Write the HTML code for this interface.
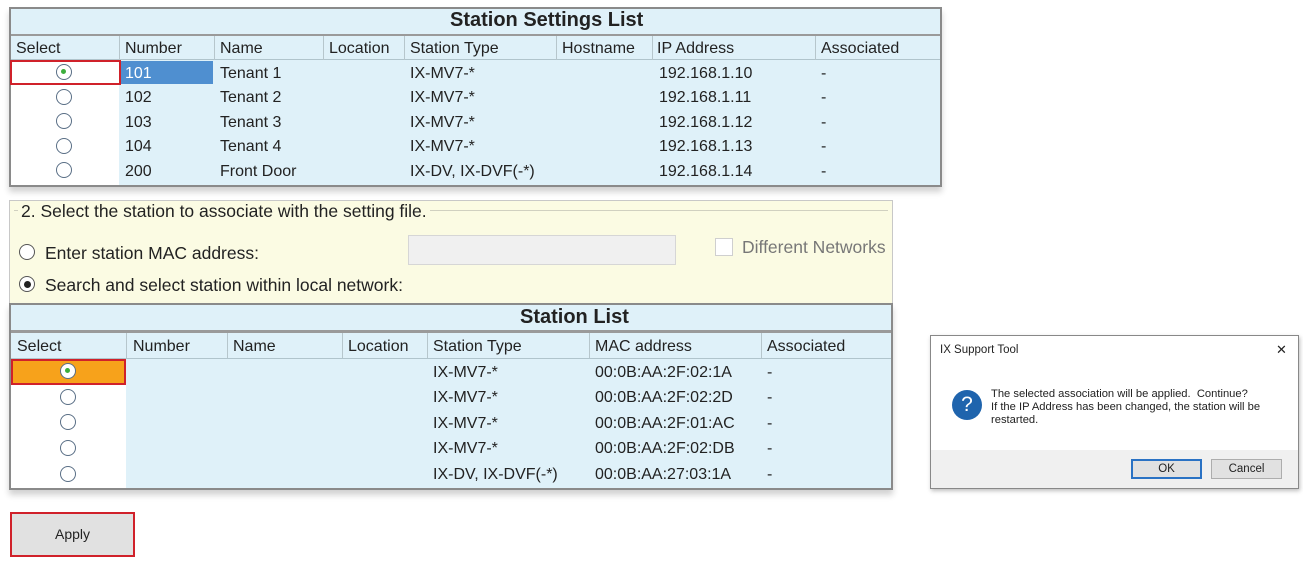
<!DOCTYPE html>
<html><head><meta charset="utf-8"><style>
*{margin:0;padding:0;box-sizing:border-box}
body{width:1303px;height:565px;background:#fff;position:relative;overflow:hidden;font-family:"Liberation Sans",Arial,sans-serif;color:#222}
.a{position:absolute;white-space:nowrap}
.t{font-size:16px;line-height:16px}
.m{font-size:17.5px;line-height:18px}
.b{position:absolute}
.r{position:absolute;width:16px;height:16px;border:1.5px solid #5a6f86;border-radius:50%;background:#fff}
.r.on::after{content:"";position:absolute;left:4px;top:4px;width:5px;height:5px;border-radius:50%;background:#3cae3c}
</style></head><body>

<!-- Top table -->
<div class="b" style="left:9px;top:7px;width:933px;height:180px;border:2px solid #8a8a8a;background:#dff1f9;box-shadow:0 5px 6px rgba(0,0,0,0.18)"></div>
<div class="a" style="left:450px;top:9px;font-weight:bold;font-size:20px">Station Settings List</div>
<div class="b" style="left:11px;top:34px;width:929px;height:2px;background:#9a9a9a"></div>
<div class="b" style="left:11px;top:59px;width:929px;height:1px;background:#b0c4cc"></div>
<div class="b" style="left:11px;top:61px;width:108px;height:124px;background:#fff"></div>
<div class="b" style="left:121px;top:61px;width:92px;height:23px;background:#4f8fd0"></div>
<div class="b" style="left:10px;top:60px;width:111px;height:25px;border:2px solid #d0212a"></div>
<div class="b" style="left:119px;top:36px;width:1px;height:24px;background:#b6c6cc"></div>
<div class="b" style="left:214px;top:36px;width:1px;height:24px;background:#b6c6cc"></div>
<div class="b" style="left:323px;top:36px;width:1px;height:24px;background:#b6c6cc"></div>
<div class="b" style="left:404px;top:36px;width:1px;height:24px;background:#b6c6cc"></div>
<div class="b" style="left:556px;top:36px;width:1px;height:24px;background:#b6c6cc"></div>
<div class="b" style="left:652px;top:36px;width:1px;height:24px;background:#b6c6cc"></div>
<div class="b" style="left:815px;top:36px;width:1px;height:24px;background:#b6c6cc"></div>
<div class="a t" style="left:16px;top:41px">Select</div>
<div class="a t" style="left:125px;top:41px">Number</div>
<div class="a t" style="left:220px;top:41px">Name</div>
<div class="a t" style="left:329px;top:41px">Location</div>
<div class="a t" style="left:410px;top:41px">Station Type</div>
<div class="a t" style="left:562px;top:41px">Hostname</div>
<div class="a t" style="left:657px;top:41px">IP Address</div>
<div class="a t" style="left:821px;top:41px">Associated</div>

<div class="r on" style="left:56px;top:64px"></div>
<div class="r" style="left:56px;top:89px"></div>
<div class="r" style="left:56px;top:113px"></div>
<div class="r" style="left:56px;top:138px"></div>
<div class="r" style="left:56px;top:162px"></div>

<div class="a t" style="left:125px;top:66px;color:#fff">101</div>
<div class="a t" style="left:125px;top:90px">102</div>
<div class="a t" style="left:125px;top:115px">103</div>
<div class="a t" style="left:125px;top:139px">104</div>
<div class="a t" style="left:125px;top:164px">200</div>
<div class="a t" style="left:220px;top:66px">Tenant 1</div>
<div class="a t" style="left:220px;top:90px">Tenant 2</div>
<div class="a t" style="left:220px;top:115px">Tenant 3</div>
<div class="a t" style="left:220px;top:139px">Tenant 4</div>
<div class="a t" style="left:220px;top:164px">Front Door</div>
<div class="a t" style="left:410px;top:66px">IX-MV7-*</div>
<div class="a t" style="left:410px;top:90px">IX-MV7-*</div>
<div class="a t" style="left:410px;top:115px">IX-MV7-*</div>
<div class="a t" style="left:410px;top:139px">IX-MV7-*</div>
<div class="a t" style="left:410px;top:164px">IX-DV, IX-DVF(-*)</div>
<div class="a t" style="left:659px;top:66px">192.168.1.10</div>
<div class="a t" style="left:659px;top:90px">192.168.1.11</div>
<div class="a t" style="left:659px;top:115px">192.168.1.12</div>
<div class="a t" style="left:659px;top:139px">192.168.1.13</div>
<div class="a t" style="left:659px;top:164px">192.168.1.14</div>
<div class="a t" style="left:821px;top:66px">-</div>
<div class="a t" style="left:821px;top:90px">-</div>
<div class="a t" style="left:821px;top:115px">-</div>
<div class="a t" style="left:821px;top:139px">-</div>
<div class="a t" style="left:821px;top:164px">-</div>

<!-- Middle yellow section -->
<div class="b" style="left:9px;top:200px;width:884px;height:104px;background:#fbfbe3;border:1px solid #c8c8c8"></div>
<div class="b" style="left:14px;top:210px;width:874px;height:1px;background:#d0d0c0"></div>
<div class="a m" style="left:18px;top:202px;background:#fbfbe3;padding:0 3px">2. Select the station to associate with the setting file.</div>
<div class="r" style="left:19px;top:244px;border-color:#555"></div>
<div class="a m" style="left:45px;top:244px">Enter station MAC address:</div>
<div class="r" style="left:19px;top:276px;border-color:#555"></div>
<div class="b" style="left:24px;top:281px;width:7px;height:7px;border-radius:50%;background:#222"></div>
<div class="a m" style="left:45px;top:276px">Search and select station within local network:</div>
<div class="b" style="left:408px;top:235px;width:268px;height:30px;background:#f0f0f0;border:1px solid #d6d6d6"></div>
<div class="b" style="left:715px;top:238px;width:18px;height:18px;background:#fff;border:1px solid #cfcfcf"></div>
<div class="a m" style="left:742px;top:238px;color:#777">Different Networks</div>

<!-- Station List -->
<div class="b" style="left:9px;top:303px;width:884px;height:187px;border:2px solid #8a8a8a;background:#dff1f9;box-shadow:0 5px 6px rgba(0,0,0,0.18)"></div>
<div class="a" style="left:520px;top:306px;font-weight:bold;font-size:20px">Station List</div>
<div class="b" style="left:11px;top:330px;width:880px;height:3px;background:#9a9a9a"></div>
<div class="b" style="left:11px;top:358px;width:880px;height:1px;background:#b0c4cc"></div>
<div class="b" style="left:11px;top:359px;width:115px;height:129px;background:#fff"></div>
<div class="b" style="left:11px;top:359px;width:115px;height:26px;background:#f7a21b;border:2px solid #d0212a"></div>
<div class="b" style="left:126px;top:333px;width:1px;height:25px;background:#b6c6cc"></div>
<div class="b" style="left:227px;top:333px;width:1px;height:25px;background:#b6c6cc"></div>
<div class="b" style="left:342px;top:333px;width:1px;height:25px;background:#b6c6cc"></div>
<div class="b" style="left:427px;top:333px;width:1px;height:25px;background:#b6c6cc"></div>
<div class="b" style="left:589px;top:333px;width:1px;height:25px;background:#b6c6cc"></div>
<div class="b" style="left:761px;top:333px;width:1px;height:25px;background:#b6c6cc"></div>
<div class="a t" style="left:17px;top:339px">Select</div>
<div class="a t" style="left:133px;top:339px">Number</div>
<div class="a t" style="left:233px;top:339px">Name</div>
<div class="a t" style="left:348px;top:339px">Location</div>
<div class="a t" style="left:433px;top:339px">Station Type</div>
<div class="a t" style="left:595px;top:339px">MAC address</div>
<div class="a t" style="left:767px;top:339px">Associated</div>

<div class="r on" style="left:60px;top:363px"></div>
<div class="r" style="left:60px;top:389px"></div>
<div class="r" style="left:60px;top:414px"></div>
<div class="r" style="left:60px;top:440px"></div>
<div class="r" style="left:60px;top:466px"></div>

<div class="a t" style="left:433px;top:365px">IX-MV7-*</div>
<div class="a t" style="left:433px;top:390px">IX-MV7-*</div>
<div class="a t" style="left:433px;top:416px">IX-MV7-*</div>
<div class="a t" style="left:433px;top:441px">IX-MV7-*</div>
<div class="a t" style="left:433px;top:467px">IX-DV, IX-DVF(-*)</div>
<div class="a t" style="left:595px;top:365px">00:0B:AA:2F:02:1A</div>
<div class="a t" style="left:595px;top:390px">00:0B:AA:2F:02:2D</div>
<div class="a t" style="left:595px;top:416px">00:0B:AA:2F:01:AC</div>
<div class="a t" style="left:595px;top:441px">00:0B:AA:2F:02:DB</div>
<div class="a t" style="left:595px;top:467px">00:0B:AA:27:03:1A</div>
<div class="a t" style="left:767px;top:365px">-</div>
<div class="a t" style="left:767px;top:390px">-</div>
<div class="a t" style="left:767px;top:416px">-</div>
<div class="a t" style="left:767px;top:441px">-</div>
<div class="a t" style="left:767px;top:467px">-</div>

<!-- Apply -->
<div class="b" style="left:10px;top:512px;width:125px;height:45px;background:#e1e1e1;border:2px solid #d0212a"></div>
<div class="a" style="left:10px;top:526px;width:125px;text-align:center;font-size:14px">Apply</div>

<!-- Dialog -->
<div class="b" style="left:930px;top:335px;width:369px;height:154px;background:#fff;border:1px solid #888;box-shadow:1px 2px 4px rgba(0,0,0,0.25)"></div>
<div class="b" style="left:931px;top:450px;width:367px;height:38px;background:#f0f0f0"></div>
<div class="a" style="left:940px;top:344px;font-size:11.5px">IX Support Tool</div>
<div class="a" style="left:1276px;top:342px;font-size:13px">✕</div>
<div class="b" style="left:952px;top:390px;width:30px;height:30px;border-radius:50%;background:#1f64ad"></div>
<div class="a" style="left:952px;top:393px;width:30px;text-align:center;color:#fff;font-size:21px">?</div>
<div class="a" style="left:991px;top:388px;font-size:11.2px;line-height:13px">The selected association will be applied.&nbsp; Continue?<br>If the IP Address has been changed, the station will be<br>restarted.</div>
<div class="b" style="left:1131px;top:459px;width:71px;height:20px;background:#e1e1e1;border:2px solid #2a72c4"></div>
<div class="a" style="left:1131px;top:463px;width:71px;text-align:center;font-size:11.5px">OK</div>
<div class="b" style="left:1211px;top:459px;width:71px;height:20px;background:#e1e1e1;border:1px solid #adadad"></div>
<div class="a" style="left:1211px;top:463px;width:71px;text-align:center;font-size:11.5px">Cancel</div>
</body></html>
